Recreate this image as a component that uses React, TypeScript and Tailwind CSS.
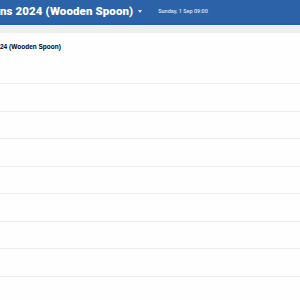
const ROWS = 8

export default function App() {
  return (
    <div className="w-[300px] h-[300px] overflow-hidden bg-[#fefefe] font-['Roboto',sans-serif]">
      {/* Header */}
      <header className="h-[25px] bg-[#2c62a8] border-b-[2px] border-[#1c5fc2] flex items-center whitespace-nowrap">
        <h1 className="text-[11.5px] font-black text-white tracking-[0.1px] leading-none">ns 2024 (Wooden Spoon)</h1>
        <span className="ml-[5px] w-0 h-0 border-l-[2.5px] border-r-[2.5px] border-t-[3px] border-l-transparent border-r-transparent border-t-[#dbe4f2]" />
        <span className="ml-[16px] text-[5.5px] font-medium text-[#dbe5f4] leading-none">Sunday, 1 Sep 09:00</span>
      </header>
      <div className="h-[1px] bg-white" />
      <div className="h-[7px] bg-[#eef0f0]" />

      {/* Panel */}
      <section className="bg-[#fefefe]">
        <div className="h-[51px] border-b border-[#eeeef0] pt-[11px]">
          <p className="font-['Liberation_Sans',sans-serif] text-[6.5px] font-bold text-black leading-none">24 (Wooden Spoon)</p>
        </div>
        {Array.from({ length: ROWS }).map((_, i) => (
          <div key={i} className="h-[27.5px] border-b border-[#ebebec]" />
        ))}
      </section>
    </div>
  )
}
